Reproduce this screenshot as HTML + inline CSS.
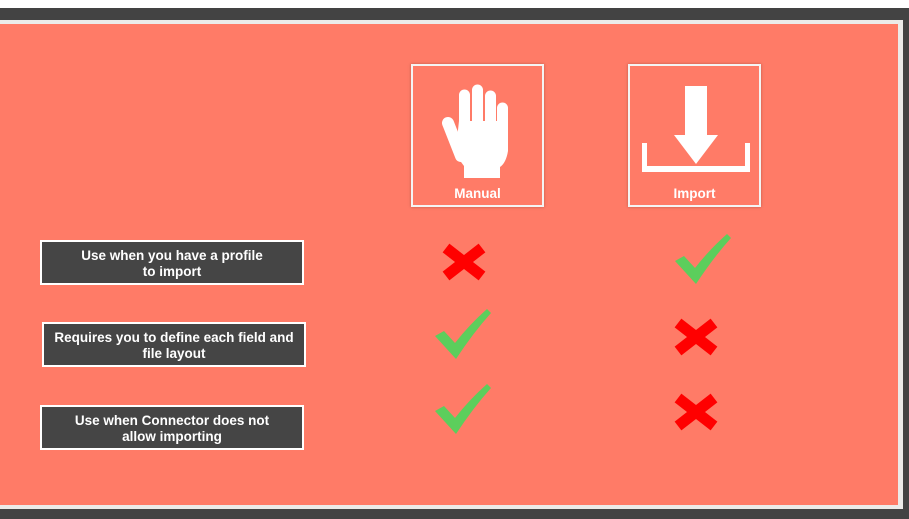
<!DOCTYPE html>
<html><head><style>
html,body{margin:0;padding:0}
body{width:909px;height:519px;position:relative;overflow:hidden;background:#fff;font-family:"Liberation Sans",Arial,sans-serif}
.dark{position:absolute;left:0;top:8px;width:909px;height:511px;background:#434343}
.frame{position:absolute;left:0;top:20px;width:903px;height:489px;background:#ecebe9}
.sal{position:absolute;left:0;top:24px;width:898px;height:481px;background:#ff7b67}
.lbl{position:absolute;width:260px;height:39px;padding-top:2px;border:2px solid #fff;background:#454545;color:#fff;font-weight:bold;font-size:13.5px;line-height:16px;text-align:center;display:flex;align-items:center;justify-content:center}
.ib{position:absolute;width:129px;height:139px;border:2px solid #f4f4f4;box-shadow:0 0 3px rgba(0,0,0,.25)}
.ib span{position:absolute;left:0;right:0;bottom:4px;text-align:center;color:#fff;font-weight:bold;font-size:13.5px}
svg{position:absolute;overflow:visible}
</style></head><body>
<div class="dark"></div><div class="frame"></div><div class="sal"></div>

<div class="ib" style="left:411px;top:64px"><span>Manual</span>
<svg style="left:0;top:0" width="129" height="139">
<g stroke="#fff" stroke-linecap="round" stroke-width="11">
<line x1="51.5" y1="29" x2="51.5" y2="70"/><line x1="64.5" y1="24" x2="64.5" y2="70"/><line x1="77.5" y1="30" x2="77.5" y2="70"/><line x1="89.5" y1="42" x2="89.5" y2="75"/>
<line x1="35" y1="57" x2="48" y2="90" stroke-width="12"/></g>
<path fill="#fff" d="M46,55 H95 V85 Q93,97 87,101 L87,112 H51 L51,100 Q45,93 43,82 Z"/>
</svg></div>

<div class="ib" style="left:628px;top:64px"><span>Import</span>
<svg style="left:0;top:0" width="129" height="139"><path fill="#fff" d="M55,20 H77 V69 H88 L66,98 L44,69 H55 Z"/><path fill="#fff" d="M12,77 H17 V100 H115 V77 H120 V106 H12 Z"/></svg></div>

<div class="lbl" style="left:40px;top:240px">Use when you have a profile<br>to import</div>
<div class="lbl" style="left:42px;top:322px">Requires you to define each field and<br>file layout</div>
<div class="lbl" style="left:40px;top:405px">Use when Connector does not<br>allow importing</div>

<svg width="0" height="0"><defs>
<g id="x"><path d="M-18,-14 L18,14 M18,-14 L-18,14" stroke="#f00" stroke-width="11"/></g>
<g id="c"><path d="M-28,3 L-19,-2 L-8,10 Q6,-8 24,-24 L28,-20 Q10,0 -7,26 Z" fill="#5cce5c"/></g>
</defs></svg>
<svg style="left:464px;top:262px" width="1" height="1"><use href="#x"/></svg>
<svg style="left:696px;top:337px" width="1" height="1"><use href="#x"/></svg>
<svg style="left:696px;top:412px" width="1" height="1"><use href="#x"/></svg>
<svg style="left:703px;top:258px" width="1" height="1"><use href="#c"/></svg>
<svg style="left:463px;top:333px" width="1" height="1"><use href="#c"/></svg>
<svg style="left:463px;top:408px" width="1" height="1"><use href="#c"/></svg>
</body></html>
